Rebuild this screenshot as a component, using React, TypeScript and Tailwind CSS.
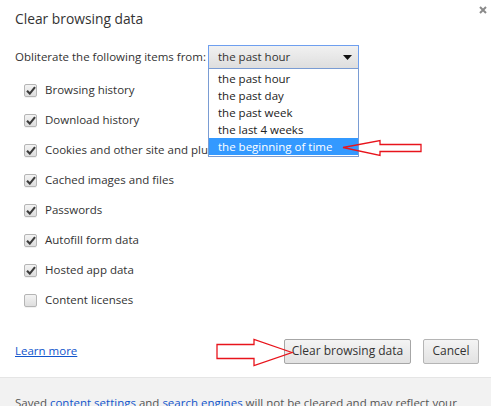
import React from "react";

const ITEMS = [
  { label: "Browsing history", checked: true },
  { label: "Download history", checked: true },
  { label: "Cookies and other site and plugin data", checked: true },
  { label: "Cached images and files", checked: true },
  { label: "Passwords", checked: true },
  { label: "Autofill form data", checked: true },
  { label: "Hosted app data", checked: true },
  { label: "Content licenses", checked: false },
];

const PERIODS = ["the past hour", "the past day", "the past week", "the last 4 weeks", "the beginning of time"];

function Checkbox({ checked }: { checked: boolean }) {
  return (
    <span className="flex h-[13px] w-[13px] items-center justify-center rounded-[2px] border border-[#b5b5b5] bg-gradient-to-b from-[#f3f3f3] to-[#dedede] shadow-[0_1px_0_rgba(0,0,0,0.05)]">
      {checked && (
        <svg width="10" height="9" viewBox="0 0 10 9">
          <path d="M1 4.8 L3.8 7.6 L9 1.2" fill="none" stroke="#3c3c3c" strokeWidth="2.1" />
        </svg>
      )}
    </span>
  );
}

export default function App() {
  return (
    <div
      className="relative h-[406px] w-[491px] overflow-hidden bg-white text-[11.5px] text-[#333]"
      style={{ fontFamily: '"Open Sans", "Noto Sans", sans-serif' }}
    >
      {/* header */}
      <div className="flex h-[42px] items-start justify-between pl-[15px] pr-[4px] pt-[9px]">
        <h1 className="text-[13.8px] leading-[20px] text-[#333]">Clear browsing data</h1>
        <svg width="8" height="8" viewBox="0 0 8 8" className="-mt-[3px]">
          <path d="M1 1 L7 7 M7 1 L1 7" stroke="#8a8a8a" strokeWidth="2" />
        </svg>
      </div>

      {/* period select */}
      <div className="flex h-[30px] items-center pl-[15px]">
        <span className="w-[193px] whitespace-nowrap">Obliterate the following items from:</span>
        <div className="relative">
          <div className="flex h-[24px] w-[151px] items-center justify-between border border-[#6e9fef] bg-gradient-to-b from-[#f1f1f1] to-[#dedede] pl-[9px] pr-[6px]">
            <span>the past hour</span>
            <svg width="9" height="5" viewBox="0 0 9 5">
              <path d="M0 0 H9 L4.5 5 Z" fill="#111" />
            </svg>
          </div>
          {/* open list */}
          <ul className="absolute left-0 top-[23px] z-10 w-[151px] border border-[#7a9cd3] bg-white py-[1px]">
            {PERIODS.map((p, i) => (
              <li
                key={p}
                className={
                  "h-[17px] pl-[9px] leading-[17px] " +
                  (i === PERIODS.length - 1 ? "bg-[#3399ff] text-white" : "text-[#222]")
                }
              >
                {p}
              </li>
            ))}
          </ul>
        </div>
      </div>

      {/* checkbox list */}
      <ul className="mt-[3px] pl-[24px]">
        {ITEMS.map((it) => (
          <li key={it.label} className="flex h-[30px] items-center gap-[8px]">
            <Checkbox checked={it.checked} />
            <span className="whitespace-nowrap">{it.label}</span>
          </li>
        ))}
      </ul>

      {/* actions */}
      <div className="mt-[24px] flex h-[24px] items-center justify-between pl-[15px] pr-[12px]">
        <a href="#" className="text-[#1155cc] underline">Learn more</a>
        <div className="flex gap-[12px]">
          <button className="h-[25px] w-[127px] rounded-[2px] border border-[#a6a6a6] bg-gradient-to-b from-[#f4f4f4] to-[#e2e2e2] text-[12px] text-[#333]">
            Clear browsing data
          </button>
          <button className="h-[25px] w-[56px] rounded-[2px] border border-[#b5b5b5] bg-gradient-to-b from-[#f4f4f4] to-[#e2e2e2] text-[12px] text-[#333]">
            Cancel
          </button>
        </div>
      </div>

      {/* footer */}
      <div className="mt-[14px] whitespace-nowrap border-t border-[#e5e5e5] bg-[#f2f2f2] pl-[15px] pt-[16px] text-[#555]">
        Saved <a className="text-[#1155cc]">content settings</a> and <a className="text-[#1155cc]">search engines</a> will not be cleared and may reflect your
      </div>

      {/* red annotation arrows */}
      <svg className="pointer-events-none absolute left-0 top-0 z-20" width="491" height="406">
        <polygon
          points="343,147.5 380,140.5 380,144.5 421,144.5 421,151.5 380,151.5 380,155.5"
          fill="none"
          stroke="#e8141c"
          strokeWidth="1.3"
        />
        <polygon
          points="292,352.5 254,339.5 254,344.5 217,344.5 217,358.5 254,358.5 254,365.5"
          fill="none"
          stroke="#e8141c"
          strokeWidth="1.3"
        />
      </svg>
    </div>
  );
}
